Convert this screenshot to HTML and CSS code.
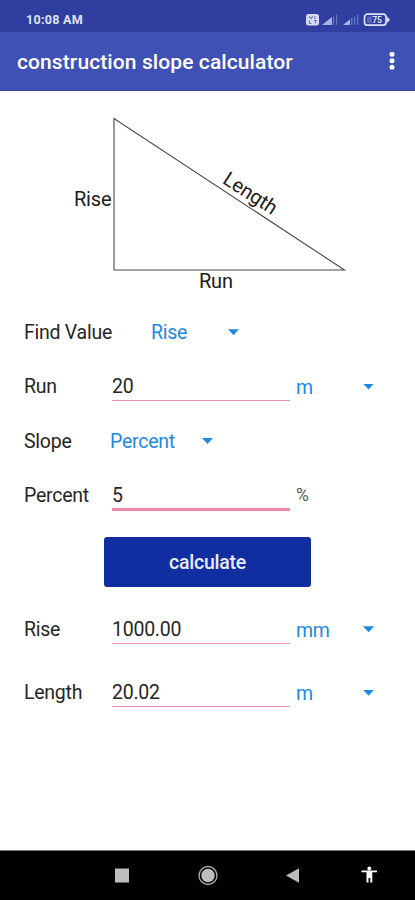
FILE: index.html
```html
<!DOCTYPE html>
<html lang="en">
<head>
<meta charset="utf-8">
<title>construction slope calculator</title>
<link rel="stylesheet" href="styles.css">
</head>
<body>
<div class="screen">
  <header class="status">
    <span class="clock">10:08 AM</span>
    <svg class="indicators" width="86" height="16" viewBox="0 0 86 16">
      <rect x="1" y="2" width="13" height="11.5" rx="2.5" fill="#d5daf5"/>
      <path d="M4 4.5l2 2 2-2M10 4v3M4.500 8.500v3h2M9 8.500h3M10.500 8.500v3" fill="none" stroke="#6d78bd" stroke-width="1.100"/>
      <path d="M17 13L27 5V13z" fill="#a9b4e4"/>
      <path d="M28 4.500h1.200V13H28zM31 2.500h1.200V13H31z" fill="#6875c4"/>
      <path d="M38 13L45 7.300V13z" fill="#a9b4e4"/>
      <path d="M46 6h1.500v7H46zM49 4.500h1.200V13H49zM52 2.500h1.200V13H52z" fill="#6875c4"/>
      <rect x="59.500" y="2.200" width="21.500" height="11" rx="3" fill="none" stroke="#dce0f7" stroke-width="1.700"/>
      <path d="M82 4.500l3 3.200-3 3.300z" fill="#dce0f7"/>
      <rect x="62" y="4.500" width="5" height="6.500" rx="1" fill="#5a67b8"/>
      <text class="charge" x="72" y="11" text-anchor="middle">75</text>
    </svg>
  </header>
  <div class="appbar">
    <h1 class="title">construction slope calculator</h1>
    <svg class="more" width="6" height="20" viewBox="0 0 6 20" fill="#fff">
      <circle cx="3" cy="3.200" r="2.500"/><circle cx="3" cy="9.700" r="2.500"/><circle cx="3" cy="16.200" r="2.500"/>
    </svg>
  </div>
  <main class="content">
    <svg class="diagram" width="415" height="214" viewBox="0 91 415 214">
      <path d="M114 118.500V270H344.500Z" fill="none" stroke="#484848" stroke-width="1.100"/>
      <text x="74" y="206">Rise</text>
      <text x="199" y="287.500">Run</text>
      <text transform="translate(221.500 182.500) rotate(33)">Length</text>
    </svg>
    <div class="row find">
      <span class="label">Find Value</span><span class="choice">Rise</span><i class="arrow"></i>
    </div>
    <div class="row">
      <span class="label">Run</span><span class="field">20</span><span class="choice unit">m</span><i class="arrow"></i>
    </div>
    <div class="row slope">
      <span class="label">Slope</span><span class="choice">Percent</span><i class="arrow"></i>
    </div>
    <div class="row">
      <span class="label">Percent</span><span class="field focused">5</span><span class="symbol">%</span>
    </div>
    <button class="calculate">calculate</button>
    <div class="row result">
      <span class="label">Rise</span><span class="field">1000.00</span><span class="choice unit">mm</span><i class="arrow"></i>
    </div>
    <div class="row result">
      <span class="label">Length</span><span class="field">20.02</span><span class="choice unit">m</span><i class="arrow"></i>
    </div>
  </main>
  <nav class="navbar">
    <svg width="415" height="48" viewBox="0 851 415 48">
      <rect x="115" y="868.500" width="14" height="14" fill="#bdbdbd"/>
      <circle cx="208" cy="875.500" r="9" fill="none" stroke="#aaa" stroke-width="1.400"/>
      <circle cx="208" cy="875.500" r="6.700" fill="#bdbdbd"/>
      <path d="M286 875.500L299 868.300V882.700Z" fill="#bdbdbd"/>
      <circle cx="369.300" cy="868.500" r="1.900" fill="#fff"/>
      <path d="M361.500 870.500H377V872.300H372.300V882.500H370.300V878H368.500V882.500H366.500V872.300H361.500Z" fill="#fff"/>
    </svg>
  </nav>
</div>
</body>
</html>
```

FILE: styles.css
```css
* { box-sizing: border-box; }
body {
  margin: 0;
  background: #fff;
  color: #262626;
  font-family: Roboto, "Liberation Sans", sans-serif;
  font-size: 19.5px;
  letter-spacing: -.25px;
}
svg { display: block; }
.screen {
  width: 415px;
  height: 900px;
  display: flex;
  flex-direction: column;
}
.status {
  height: 32px;
  padding: 6px 24px 0 26px;
  display: flex;
  justify-content: space-between;
  background: #303f9f;
}
.clock {
  color: #dfe3fa;
  font-size: 12.5px;
  font-weight: 700;
  line-height: 28px;
  letter-spacing: .3px;
}
.indicators { margin-top: 6px; }
.charge { fill: #dce0f7; font-size: 8.5px; font-weight: 700; }
.appbar {
  height: 59px;
  padding: 0 20px 0 17px;
  display: flex;
  align-items: center;
  justify-content: space-between;
  background: #3f51b5;
  border-bottom: 1px solid #3545a8;
}
.title {
  margin: 0;
  padding-top: 2px;
  color: #fff;
  font-size: 21px;
  font-weight: 500;
  letter-spacing: .1px;
}
.content { flex: 1; }
.diagram text { font-size: 20px; letter-spacing: -.2px; fill: #202020; }
.row {
  height: 54.4px;
  padding-left: 24px;
  display: grid;
  grid-template-columns: 88px 178px 73px 11px;
  align-items: center;
}
.row .choice, .row .symbol { padding-left: 6px; }
.find { grid-template-columns: 127px 77px 11px; }
.slope { grid-template-columns: 86px 92px 11px; }
.find .choice, .slope .choice { padding-left: 0; }
.slope .label, .slope .choice { padding-top: 1px; }
.choice { color: #1e88e5; }
.row .unit { padding-top: 2px; }
.symbol { color: #555; font-size: 17.5px; }
.field {
  height: 30px;
  padding-top: 2px;
  line-height: 28px;
  align-self: start;
  margin-top: 12px;
  border-bottom: 1.5px solid #f48fb1;
}
.focused { border-bottom: 3px solid #f284ae; height: 31px; }
.arrow {
  width: 11px;
  height: 6px;
  background: #1e88e5;
  clip-path: polygon(0 0, 100% 0, 50% 100%);
}
.calculate {
  display: block;
  width: 207px;
  height: 50px;
  margin: 14px 0 15px 104px;
  padding: 2px 0 0;
  border: 0;
  border-radius: 3px;
  background: #112ea0;
  color: #e7eaff;
  font: 500 19.5px Roboto, "Liberation Sans", sans-serif;
  letter-spacing: -.25px;
}
.result { height: 63.5px; padding-bottom: 8px; }
.navbar {
  height: 50px;
  background: #000;
  border-top: 1px solid #777;
}
```
